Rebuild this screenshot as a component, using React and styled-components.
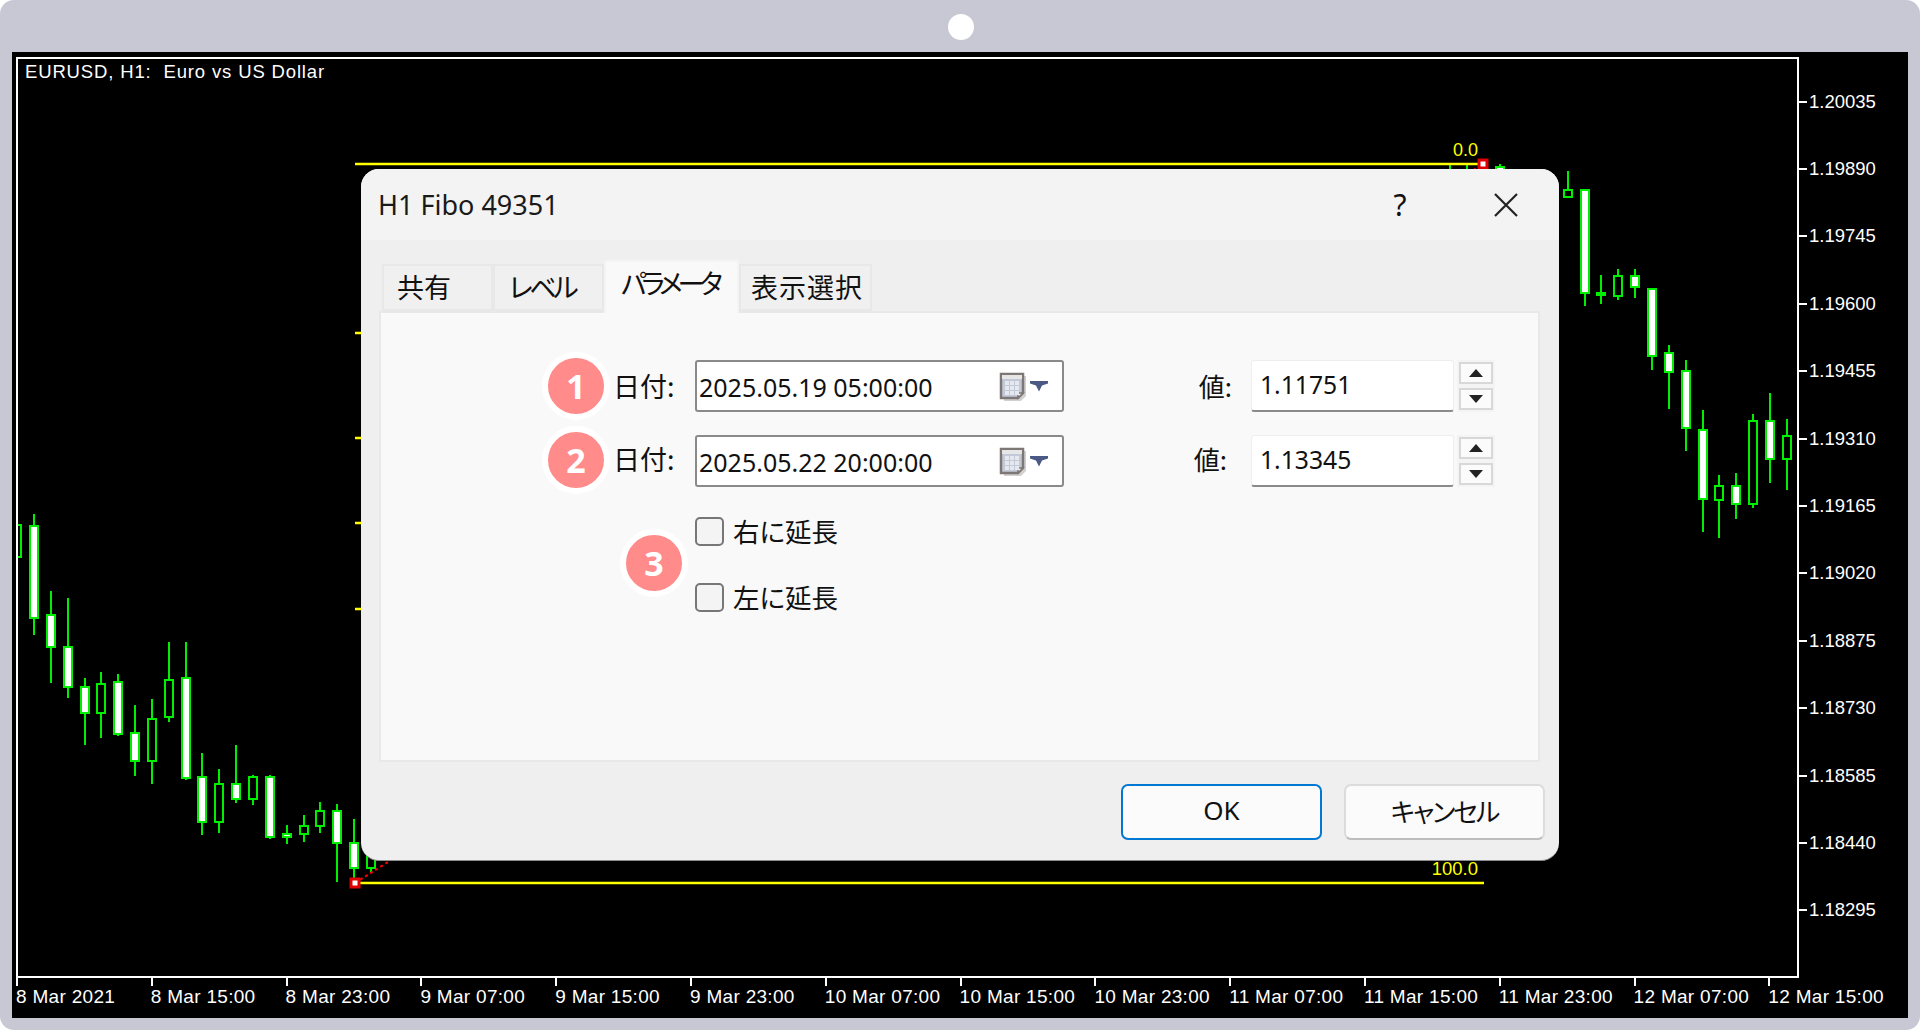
import React from 'react';
import styled, { createGlobalStyle } from 'styled-components';

const GlobalStyle = createGlobalStyle`
  html, body {
    margin: 0;
    padding: 0;
    background: #fff;
  }
  * {
    box-sizing: border-box;
  }
`;

const uiFont = `"Noto Sans", "Noto Sans CJK JP", sans-serif`;
const jpFont = `"Noto Sans CJK JP", "Noto Sans", sans-serif`;
const chartFont = `"Liberation Sans", sans-serif`;

const Frame = styled.div`
  position: relative;
  width: 1920px;
  height: 1030px;
  padding: 52px 12px 12px;
  background: #c8c8d4;
  border-radius: 14px;
  overflow: hidden;
`;

const CameraDot = styled.div`
  position: absolute;
  left: 948px;
  top: 14px;
  width: 26px;
  height: 26px;
  border-radius: 50%;
  background: #fff;
`;

const Chart = styled.div`
  height: 966px;
  padding: 5px 0 0 4px;
  background: #000;
  display: grid;
  grid-template-columns: 1783px 1fr;
  grid-template-rows: 921px 1fr;
  color: #fff;
  font-family: ${chartFont};
`;

const Plot = styled.div`
  position: relative;
  border: 2px solid #fff;
`;

const ChartTitle = styled.div`
  position: relative;
  padding: 2px 0 0 7px;
  font-size: 18.5px;
  letter-spacing: 0.85px;
  line-height: 22px;
  white-space: pre;
`;

const CandleLayer = styled.svg`
  position: absolute;
  inset: 0;
  width: 100%;
  height: 100%;
`;

const PriceAxis = styled.div`
  display: flex;
  flex-direction: column;
  padding-top: 11px;
`;

const PriceLabel = styled.div`
  height: 67.4px;
  flex: none;
  display: flex;
  align-items: center;
  gap: 2px;
  font-size: 18.5px;

  &::before {
    content: '';
    width: 8px;
    height: 2px;
    background: #fff;
  }
`;

const TimeAxis = styled.div`
  grid-column: 1 / 3;
  display: flex;
`;

const TimeLabel = styled.div`
  width: 134.8px;
  flex: none;
  font-size: 19px;
  letter-spacing: 0.3px;
  line-height: 22px;
  white-space: nowrap;

  &::before {
    content: '';
    display: block;
    width: 2px;
    height: 8px;
    background: #fff;
  }
`;

const Dialog = styled.div`
  position: absolute;
  left: 361px;
  top: 169px;
  width: 1198px;
  height: 692px;
  display: flex;
  flex-direction: column;
  background: #efefef;
  border-bottom: 1px solid #8c8c8c;
  border-radius: 18px;
  overflow: hidden;
  font-family: ${jpFont};
  font-feature-settings: 'palt';
  color: #111;
`;

const TitleBar = styled.div`
  height: 71px;
  flex: none;
  display: flex;
  align-items: center;
  padding-left: 17px;
  background: #f3f3f3;
`;

const DialogTitle = styled.div`
  flex: 1;
  font-family: ${uiFont};
  font-size: 27px;
  color: #1a1a1a;
`;

const HelpMark = styled.div`
  width: 24px;
  margin-right: 82px;
  text-align: center;
  font-family: ${uiFont};
  font-size: 30px;
  line-height: 36px;
`;

const CloseIcon = styled.svg`
  width: 24px;
  height: 24px;
  margin-right: 41px;
`;

const TabBar = styled.div`
  height: 51px;
  margin: 20px 0 0 21px;
  display: flex;
  align-items: flex-end;
  position: relative;
`;

const Tab = styled.div`
  width: ${(p) => p.$width}px;
  height: ${(p) => (p.$active ? 53 : 47)}px;
  margin-bottom: ${(p) => (p.$active ? -2 : 0)}px;
  padding: 3px 0 0 ${(p) => p.$inset}px;
  background: ${(p) => (p.$active ? '#f9f9f9' : '#f0f0f0')};
  border: 2px solid ${(p) => (p.$active ? '#f4f4f4' : '#e8e8e8')};
  border-bottom-width: ${(p) => (p.$active ? 0 : 2)}px;
  position: relative;
  z-index: ${(p) => (p.$active ? 1 : 0)};
  font-size: 27px;
  line-height: 36px;
  white-space: nowrap;
  letter-spacing: ${(p) => p.$spacing || 0}px;
`;

const Panel = styled.div`
  width: 1161px;
  height: 451px;
  margin-left: 18px;
  flex: none;
  padding-top: 47px;
  background: #f9f9f9;
  border: 2px solid #e8e8e8;
`;

const FieldRow = styled.div`
  position: relative;
  display: flex;
  align-items: center;
  height: 52px;
  margin-bottom: 23px;
  padding-left: 232px;
`;

const FieldLabel = styled.div`
  width: 82px;
  flex: none;
  margin-top: ${(p) => p.$lift || 0}px;
  font-size: 27px;
  line-height: 36px;
`;

const DateBox = styled.div`
  width: 369px;
  height: 52px;
  flex: none;
  display: flex;
  align-items: center;
  padding: 1px 14px 0 2px;
  background: #fff;
  border: 2px solid #8a8a8a;
  border-radius: 3px;
  font-family: ${uiFont};
  font-size: 25px;
`;

const DateText = styled.span`
  flex: 1;
`;

const DropArrow = styled.svg`
  width: 18px;
  height: 11px;
  margin: 0 0 0 3px;
  flex: none;
  align-self: flex-start;
  margin-top: 18px;
`;

const ValueLabel = styled.div`
  width: 187px;
  flex: none;
  margin-top: ${(p) => p.$lift || 0}px;
  padding-right: ${(p) => p.$pad}px;
  text-align: right;
  font-size: 26px;
  line-height: 36px;
`;

const ValueBox = styled.div`
  width: 203px;
  height: 52px;
  flex: none;
  display: flex;
  align-items: center;
  padding: 0 0 3px 8px;
  background: #fff;
  border: 1px solid #eeeeee;
  border-bottom: 2px solid #8a8a8a;
  border-radius: 3px;
  font-family: ${uiFont};
  font-size: 24.7px;
`;

const Spinner = styled.div`
  width: 38px;
  height: 52px;
  flex: none;
  margin-left: 3px;
  padding: 2px;
  display: flex;
  flex-direction: column;
  gap: 4px;
  background: #f4f4f4;
`;

const SpinButton = styled.div`
  flex: 1;
  width: 34px;
  display: flex;
  align-items: center;
  justify-content: center;
  background: #fbfbfb;
  border: 2px solid #d8d8d8;
`;

const Arrow = styled.span`
  width: 0;
  height: 0;
  border-left: 7px solid transparent;
  border-right: 7px solid transparent;
  ${(p) => (p.$up ? 'border-bottom' : 'border-top')}: 8px solid #222;
`;

const Badge = styled.div`
  position: absolute;
  left: ${(p) => p.$left}px;
  top: calc(50% + ${(p) => p.$nudge || 0}px);
  width: 68px;
  height: 68px;
  transform: translateY(-50%);
  display: flex;
  align-items: center;
  justify-content: center;
  background: #ff8b8b;
  border: 6px solid #fff;
  border-radius: 50%;
  color: #fff;
  font-family: "Open Sans", sans-serif;
  font-weight: 700;
  font-size: 34px;
`;

const CheckGroup = styled.div`
  position: relative;
  display: flex;
  flex-direction: column;
  gap: 37px;
  margin-top: 30px;
  padding-left: 314px;
`;

const CheckRow = styled.div`
  display: flex;
  align-items: center;
  gap: 9px;
  height: 29px;
  font-size: 26.5px;
`;

const CheckBox = styled.span`
  width: 29px;
  height: 29px;
  flex: none;
  background: #f4f4f4;
  border: 2px solid #777;
  border-radius: 5px;
`;

const CheckText = styled.span`
  margin-top: -3px;
`;

const Footer = styled.div`
  display: flex;
  justify-content: flex-end;
  gap: 22px;
  padding: 22px 14px 0 0;
`;

const DialogButton = styled.div`
  width: 201px;
  height: 56px;
  display: flex;
  align-items: center;
  justify-content: center;
  padding-bottom: 4px;
  background: #fbfbfb;
  border: 2px solid ${(p) => (p.$primary ? '#0078d4' : '#dcdcdc')};
  border-bottom-color: ${(p) => (p.$primary ? '#0078d4' : '#bdbdbd')};
  border-radius: 7px;
  font-size: 26px;
  letter-spacing: ${(p) => (p.$primary ? 0 : -2)}px;
  font-family: ${(p) => (p.$primary ? uiFont : jpFont)};
`;

const prices = ['1.20035', '1.19890', '1.19745', '1.19600', '1.19455', '1.19310', '1.19165', '1.19020', '1.18875', '1.18730', '1.18585', '1.18440', '1.18295'];

const times = ['8 Mar 2021', '8 Mar 15:00', '8 Mar 23:00', '9 Mar 07:00', '9 Mar 15:00', '9 Mar 23:00', '10 Mar 07:00', '10 Mar 15:00', '10 Mar 23:00', '11 Mar 07:00', '11 Mar 15:00', '11 Mar 23:00', '12 Mar 07:00', '12 Mar 15:00'];

// x, wick top, body top, body bottom, wick bottom, solid
const candles = [
  [17, 515, 525, 557, 570, 0],
  [34, 514, 526, 618, 635, 1],
  [51, 591, 615, 647, 683, 1],
  [68, 598, 647, 687, 698, 1],
  [85, 678, 687, 713, 745, 1],
  [101, 672, 684, 713, 738, 0],
  [118, 674, 682, 734, 736, 1],
  [135, 705, 733, 761, 776, 1],
  [152, 699, 719, 761, 784, 0],
  [169, 642, 680, 717, 722, 0],
  [186, 642, 678, 778, 780, 1],
  [202, 753, 777, 822, 835, 1],
  [219, 769, 784, 822, 833, 0],
  [236, 745, 784, 799, 803, 1],
  [253, 775, 777, 799, 805, 0],
  [270, 775, 777, 837, 839, 1],
  [287, 825, 834, 837, 844, 1],
  [304, 815, 826, 834, 842, 0],
  [320, 802, 811, 826, 833, 0],
  [337, 804, 811, 843, 882, 1],
  [354, 819, 843, 868, 882, 1],
  [371, 840, 855, 868, 872, 0],
  [1450, 165, 175, 200, 210, 0],
  [1467, 165, 175, 200, 210, 0],
  [1500, 164, 167, 200, 210, 1],
  [1568, 171, 190, 197, 197, 0],
  [1585, 190, 190, 293, 306, 1],
  [1601, 275, 293, 295, 304, 1],
  [1618, 269, 276, 296, 300, 0],
  [1635, 269, 276, 287, 298, 1],
  [1652, 289, 289, 356, 370, 1],
  [1669, 345, 353, 372, 409, 1],
  [1686, 360, 371, 428, 451, 1],
  [1703, 410, 430, 499, 532, 1],
  [1719, 475, 486, 500, 538, 0],
  [1736, 473, 486, 504, 519, 1],
  [1753, 414, 421, 504, 508, 0],
  [1770, 393, 421, 459, 483, 1],
  [1787, 419, 436, 459, 490, 0],
];

const fiboLevels = [164, 333, 438, 523, 609, 883];

function ChartDrawing() {
  return (
    <CandleLayer viewBox="18 59 1779 917">
      {candles.map(([x, wickTop, top, bottom, wickBottom, solid]) => (
        <g key={x} stroke="#00ee00" strokeWidth="2">
          <line x1={x} x2={x} y1={wickTop} y2={wickBottom} />
          <rect x={x - 4} y={top} width="8" height={bottom - top} fill={solid ? '#fff' : '#000'} />
        </g>
      ))}
      {fiboLevels.map((y) => (
        <line key={y} x1="355" x2="1484" y1={y} y2={y} stroke="#ffff00" strokeWidth="2.400" />
      ))}
      <line x1="355" y1="883" x2="1483" y2="164" stroke="#ff0000" strokeWidth="2" strokeDasharray="3 3" />
      <rect x="351" y="879" width="8" height="8" fill="#fff" stroke="#e00000" strokeWidth="3" />
      <rect x="1479" y="160" width="8" height="8" fill="#fff" stroke="#e00000" strokeWidth="3" />
      <text x="1478" y="156" textAnchor="end" fill="#ffff00" fontSize="18">0.0</text>
      <text x="1478" y="875" textAnchor="end" fill="#ffff00" fontSize="18.500">100.0</text>
    </CandleLayer>
  );
}

function CalendarIcon() {
  return (
    <svg width="28" height="30" viewBox="0 0 28 30">
      <path d="M5 4h22v20l-5 5H5z" fill="#000" opacity="0.18" />
      <path d="M2 2h22v19l-5 5H2z" fill="#c4c9d8" stroke="#7d7875" strokeWidth="2.500" />
      <rect x="3" y="3" width="20" height="4" fill="#e6e6e6" />
      <path d="M19 26v-5h5z" fill="#f2f2f2" stroke="#7d7875" strokeWidth="1.500" />
      {[6, 11, 16].map((x) =>
        [9, 14, 19].map((y) => <rect key={`${x}-${y}`} x={x} y={y} width="4" height="4" fill="#e6e8f0" />)
      )}
    </svg>
  );
}

function DateField({ value }) {
  return (
    <DateBox>
      <DateText>{value}</DateText>
      <CalendarIcon />
      <DropArrow viewBox="0 0 18 11">
        <path d="M0 0h18v2.500l-6 2-3 6-3-6-6-2z" fill="#4a5a85" />
      </DropArrow>
    </DateBox>
  );
}

function SpinControl() {
  return (
    <Spinner>
      <SpinButton><Arrow $up /></SpinButton>
      <SpinButton><Arrow /></SpinButton>
    </Spinner>
  );
}

function App() {
  return (
    <>
      <GlobalStyle />
      <Frame>
        <CameraDot />
        <Chart>
          <Plot>
            <ChartDrawing />
            <ChartTitle>{'EURUSD, H1:  Euro vs US Dollar'}</ChartTitle>
          </Plot>
          <PriceAxis>
            {prices.map((p) => <PriceLabel key={p}>{p}</PriceLabel>)}
          </PriceAxis>
          <TimeAxis>
            {times.map((t) => <TimeLabel key={t}>{t}</TimeLabel>)}
          </TimeAxis>
        </Chart>
        <Dialog>
          <TitleBar>
            <DialogTitle>H1 Fibo 49351</DialogTitle>
            <HelpMark>?</HelpMark>
            <CloseIcon viewBox="0 0 24 24">
              <path d="M1 1l22 22M23 1L1 23" stroke="#222" strokeWidth="2.200" fill="none" />
            </CloseIcon>
          </TitleBar>
          <TabBar>
            <Tab $width={111} $inset={13}>共有</Tab>
            <Tab $width={111} $inset={14} $spacing={-3.5}>レベル</Tab>
            <Tab $width={135} $inset={15} $active $spacing={-5}>パラメータ</Tab>
            <Tab $width={133} $inset={10} $spacing={1}>表示選択</Tab>
          </TabBar>
          <Panel>
            <FieldRow>
              <Badge $left={161}>1</Badge>
              <FieldLabel>日付:</FieldLabel>
              <DateField value="2025.05.19 05:00:00" />
              <ValueLabel $pad={19}>値:</ValueLabel>
              <ValueBox>1.11751</ValueBox>
              <SpinControl />
            </FieldRow>
            <FieldRow>
              <Badge $left={161} $nudge={-1}>2</Badge>
              <FieldLabel $lift={-4}>日付:</FieldLabel>
              <DateField value="2025.05.22 20:00:00" />
              <ValueLabel $pad={24} $lift={-4}>値:</ValueLabel>
              <ValueBox>1.13345</ValueBox>
              <SpinControl />
            </FieldRow>
            <CheckGroup>
              <Badge $left={239} $nudge={-2}>3</Badge>
              <CheckRow><CheckBox /><CheckText>右に延長</CheckText></CheckRow>
              <CheckRow><CheckBox /><CheckText>左に延長</CheckText></CheckRow>
            </CheckGroup>
          </Panel>
          <Footer>
            <DialogButton $primary>OK</DialogButton>
            <DialogButton>キャンセル</DialogButton>
          </Footer>
        </Dialog>
      </Frame>
    </>
  );
}

export default App;
